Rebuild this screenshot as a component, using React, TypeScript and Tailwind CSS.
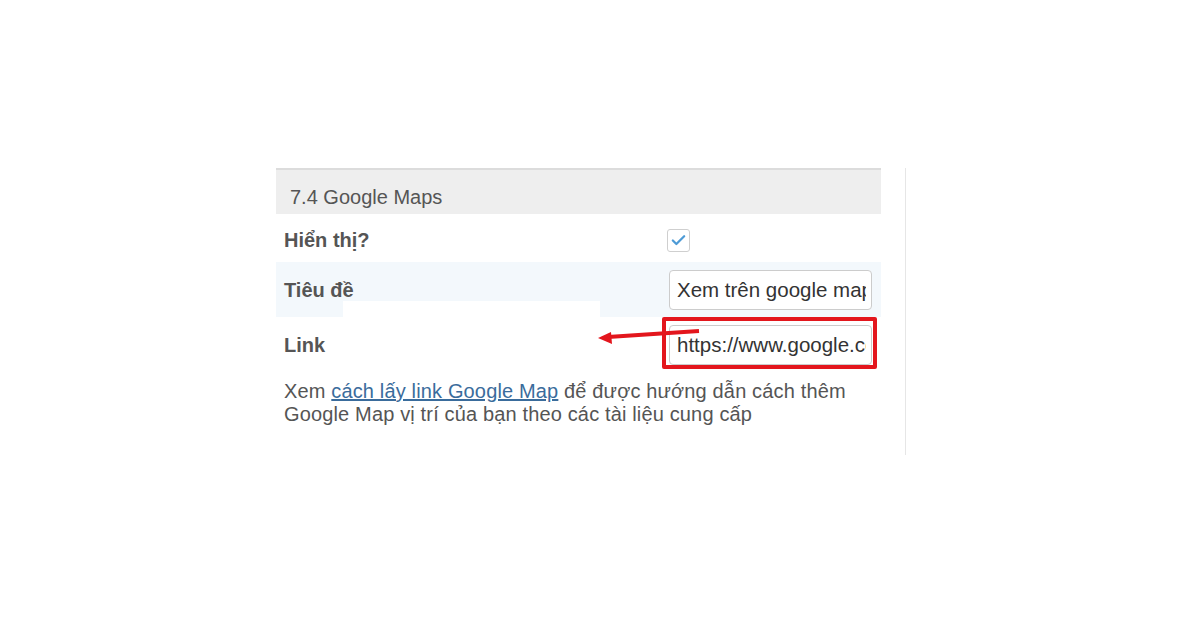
import { Check } from "lucide-react";

const font = { fontFamily: '"Liberation Sans", Arial, sans-serif' };

const Label = ({ children }: { children: React.ReactNode }) => (
  <div className="w-[391px] pl-[8px] text-[20px] font-bold text-[#555]">{children}</div>
);

const TextBox = ({ value }: { value: string }) => (
  <input
    readOnly
    value={value}
    className="ml-[2px] h-[40px] w-[203px] rounded-[4px] border border-[#cccccc] bg-white pl-[7px] pr-[5px] text-[20.5px] text-[#333] outline-none"
    style={font}
  />
);

const App = () => {
  return (
    <div className="flex h-[625px] w-[1200px] bg-white pl-[276px] pt-[168px]" style={font}>
      <div className="w-[605px]">
        {/* section header */}
        <div className="flex h-[46px] items-center border-t-2 border-[#dcdcdc] bg-[#eeeeee] pl-[14px] pt-[9px] text-[20px] text-[#555]">
          7.4 Google Maps
        </div>

        {/* show? */}
        <div className="flex h-[48px] items-center pt-[4px]">
          <Label>Hiển thị?</Label>
          <div className="flex h-[23px] w-[23px] items-center justify-center rounded-[3px] border border-[#cfcfcf] bg-white">
            <Check className="h-[17px] w-[17px] text-[#4e9bd6]" strokeWidth={3.2} />
          </div>
        </div>

        {/* title */}
        <div className="relative flex h-[55px] items-center bg-[#f3f8fc]">
          <Label>Tiêu đề</Label>
          <TextBox value="Xem trên google map" />
          <div className="absolute bottom-0 left-[67px] h-[16px] w-[257px] bg-white" />
        </div>

        {/* link */}
        <div className="relative flex h-[56px] items-center">
          <Label>Link</Label>
          <TextBox value="https://www.google.com/maps/embed" />
          <div className="absolute left-[386px] top-0 h-[52px] w-[215px] rounded-[2px] border-4 border-[#e3161d]" />
          <svg className="absolute left-[320px] top-[8px]" width="106" height="20" viewBox="0 0 106 20">
            <line x1="103" y1="6" x2="12" y2="12" stroke="#e3161d" strokeWidth="4" />
            <polygon points="2,13 15,7 16,19" fill="#e3161d" />
          </svg>
        </div>

        {/* help */}
        <p className="pl-[8px] pt-[7px] text-[20px] leading-[23px] tracking-[0.15px] text-[#555]">
          Xem{" "}
          <a className="text-[#3a6c9c] underline" href="#">
            cách lấy link Google Map
          </a>{" "}
          để được hướng dẫn cách thêm
          <br />
          Google Map vị trí của bạn theo các tài liệu cung cấp
        </p>
      </div>

      {/* right divider */}
      <div className="ml-[24px] h-[287px] w-px bg-[#e6e6e6]" />
    </div>
  );
};

export default App;
